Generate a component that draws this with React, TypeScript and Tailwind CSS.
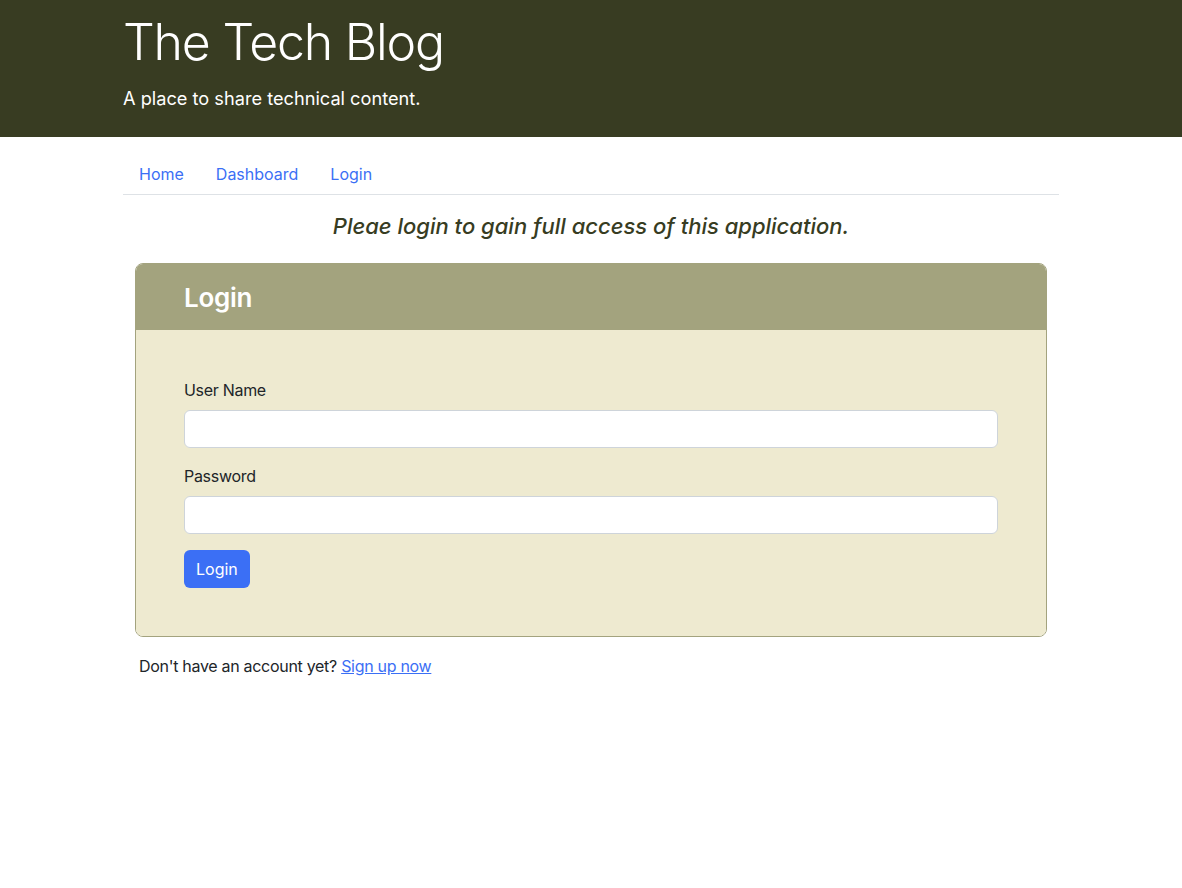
import React from "react";

const font = { fontFamily: '"Inter", "Noto Sans", "Liberation Sans", sans-serif' };

function Header() {
    return (
        <header className="bg-[#383c22] text-white h-[137px]">
            <div className="w-[936px] mx-auto pt-[10px]">
                <h1 className="text-[50px] leading-[64px] font-light tracking-[-1.2px]">The Tech Blog</h1>
                <p className="text-[18.2px] leading-[27px] font-normal mt-[11px]">
                    A place to share technical content.
                </p>
            </div>
        </header>
    );
}

function Nav() {
    return (
        <nav className="flex border-b border-[#dee2e6] mt-[17px]">
            <a href="#" className="px-4 py-2 text-[16px] leading-6 text-[#3b6ff5]">Home</a>
            <a href="#" className="px-4 py-2 text-[16px] leading-6 text-[#3b6ff5]">Dashboard</a>
            <a href="#" className="px-4 py-2 text-[16px] leading-6 text-[#3b6ff5]">Login</a>
        </nav>
    );
}

function LoginCard() {
    return (
        <div className="mx-3 mt-[22px] rounded-lg border border-[#a3a37e] overflow-hidden">
            <div className="bg-[#a3a37e] h-[66px] flex items-center px-12">
                <h3 className="text-[26px] font-semibold tracking-[-0.3px] text-white">Login</h3>
            </div>
            <form className="bg-[#eeead0] p-12 flex flex-col">
                <label className="text-[16px] leading-6 tracking-[-0.3px] text-[#212529] mb-2">User Name</label>
                <input type="text" className="h-[38px] bg-white border border-[#ced4da] rounded-md mb-4" />
                <label className="text-[16px] leading-6 tracking-[-0.3px] text-[#212529] mb-2">Password</label>
                <input type="password" className="h-[38px] bg-white border border-[#ced4da] rounded-md mb-4" />
                <div>
                    <button type="submit" className="bg-[#3b6ff5] text-white rounded-md h-[38px] px-3 text-[16px]">
                        Login
                    </button>
                </div>
            </form>
        </div>
    );
}

export default function App() {
    return (
        <div className="min-h-[888px] bg-white text-[#212529]" style={font}>
            <Header />
            <div className="w-[936px] mx-auto">
                <Nav />
                <h4 className="text-center italic font-medium text-[22px] leading-[30px] text-[#373c22] mt-4">
                    Pleae login to gain full access of this application.
                </h4>
                <LoginCard />
                <p className="mt-[17px] px-4 text-[16px] leading-6 tracking-[-0.3px]">
                    Don't have an account yet?{" "}
                    <a href="#" className="text-[#3b6ff5] underline">Sign up now</a>
                </p>
            </div>
        </div>
    );
}
